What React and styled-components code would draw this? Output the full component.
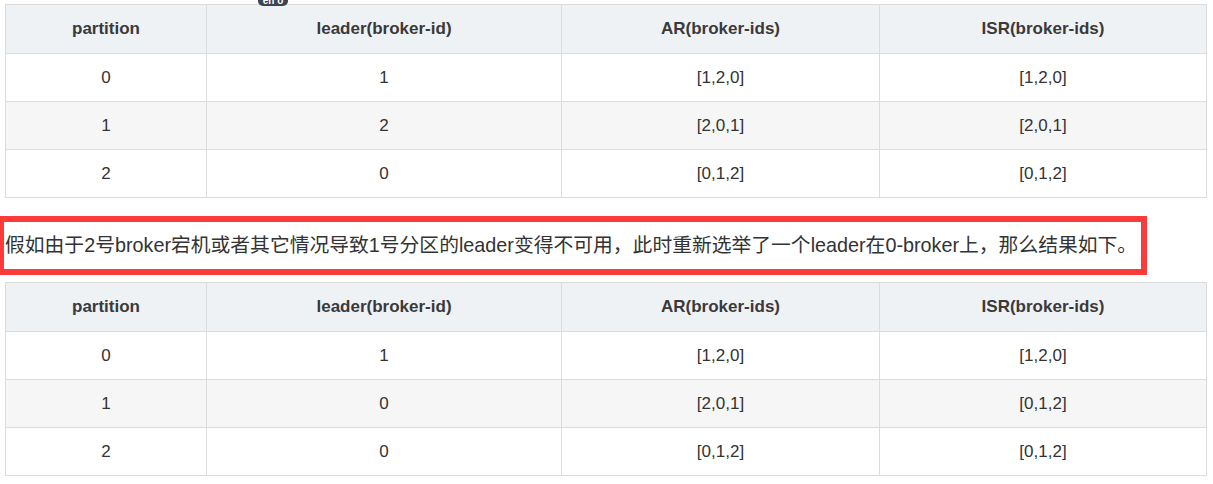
import React from "react";
import styled, { createGlobalStyle } from "styled-components";

const Global = createGlobalStyle`
  html, body { margin: 0; padding: 0; background: #fff; }
  body { font-family: "Liberation Sans", Arial, "Noto Sans CJK SC", sans-serif; color: #333; }
`;

const Page = styled.div`
  position: relative;
  padding: 4px 0 0 5px;
  width: 1213px;
  box-sizing: border-box;
`;

const Badge = styled.span`
  position: absolute;
  top: -10px;
  left: 258px;
  width: 30px;
  height: 16px;
  border-radius: 5px;
  background: #3b4450;
  color: #fff;
  font-size: 10px;
  line-height: 22px;
  text-align: center;
  font-weight: bold;
`;

const Table = styled.table`
  border-collapse: collapse;
  table-layout: fixed;
  width: 1201px;
  font-size: 17px;
  color: #333;
`;

const Th = styled.th`
  height: 48px;
  padding: 0;
  border: 1px solid #dcdcdc;
  background: #eff2f5;
  font-weight: bold;
  text-align: center;
  color: #3a3a3a;
`;

const Tr = styled.tr`
  background: ${(p) => (p.$striped ? "#f6f6f6" : "#fff")};
`;

const Td = styled.td`
  height: 47px;
  padding: 0;
  border: 1px solid #dcdcdc;
  text-align: center;
  vertical-align: middle;
`;

const Notice = styled.p`
  display: inline-block;
  margin: 18px 0 7px -7px;
  padding: 0 4px 0 1px;
  border: 6px solid #fb3a3a;
  height: 47px;
  line-height: 47px;
  font-size: 19.8px;
  color: #333;
  white-space: nowrap;
`;

const widths = [201, 355, 318, 327];
const headers = ["partition", "leader(broker-id)", "AR(broker-ids)", "ISR(broker-ids)"];

function DataTable({ rows }) {
  return (
    <Table>
      <colgroup>
        {widths.map((w, i) => (
          <col key={i} style={{ width: w }} />
        ))}
      </colgroup>
      <thead>
        <tr>
          {headers.map((h) => (
            <Th key={h}>{h}</Th>
          ))}
        </tr>
      </thead>
      <tbody>
        {rows.map((r, i) => (
          <Tr key={i} $striped={i % 2 === 1}>
            {r.map((c, j) => (
              <Td key={j}>{c}</Td>
            ))}
          </Tr>
        ))}
      </tbody>
    </Table>
  );
}

const before = [
  ["0", "1", "[1,2,0]", "[1,2,0]"],
  ["1", "2", "[2,0,1]", "[2,0,1]"],
  ["2", "0", "[0,1,2]", "[0,1,2]"],
];
const after = [
  ["0", "1", "[1,2,0]", "[1,2,0]"],
  ["1", "0", "[2,0,1]", "[0,1,2]"],
  ["2", "0", "[0,1,2]", "[0,1,2]"],
];

export default function App() {
  return (
    <Page>
      <Global />
      <Badge>en o</Badge>
      <DataTable rows={before} />
      <Notice>
        假如由于2号broker宕机或者其它情况导致1号分区的leader变得不可用，此时重新选举了一个leader在0-broker上，那么结果如下。
      </Notice>
      <DataTable rows={after} />
    </Page>
  );
}
